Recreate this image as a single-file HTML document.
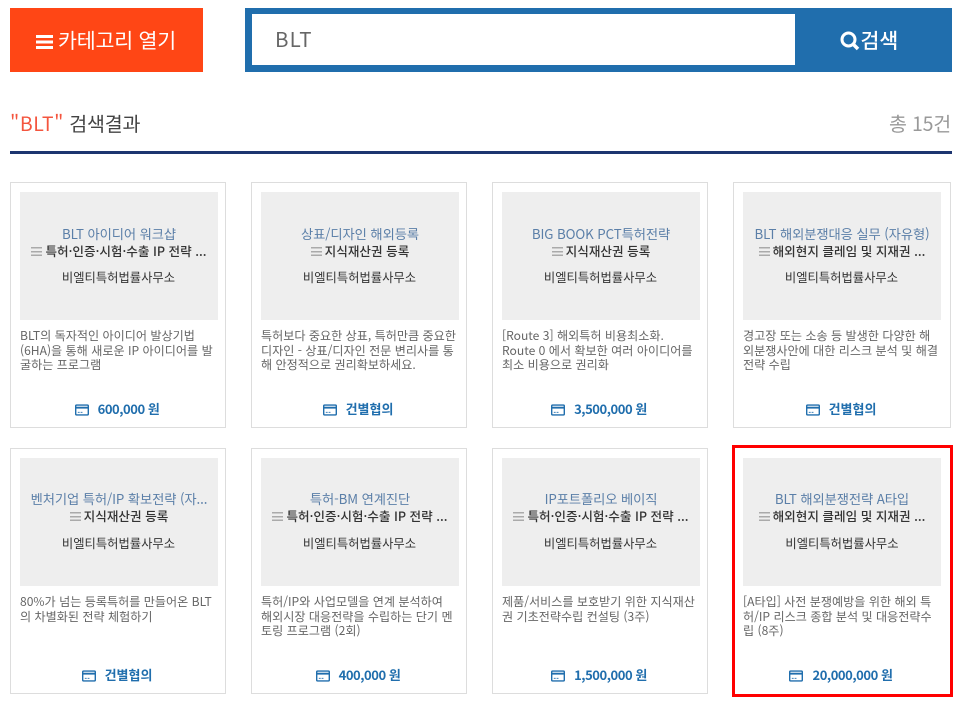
<!DOCTYPE html>
<html lang="ko"><head><meta charset="utf-8"><title>검색결과</title>
<style>
*{box-sizing:border-box;margin:0;padding:0}
html,body{width:966px;height:708px;overflow:hidden;background:#fff}
body{position:relative;font-family:"Noto Sans CJK KR","Liberation Sans",sans-serif;color:#333}
.a{position:absolute;white-space:nowrap}
.card{position:absolute;width:216px;height:246px;border:1px solid #ddd;background:#fff}
.card .g{position:absolute;left:9px;top:9px;width:198px;height:128px;background:#eee}
.t,.c,.o{position:absolute;left:9px;width:198px;text-align:center;white-space:nowrap;line-height:18px}
.t{top:41px;color:#5b7fa8;font-size:13.300px;letter-spacing:-.1px}
.c{top:58px;color:#333;font-weight:500;font-size:12.600px}
.o{top:85px;left:8.500px;color:#333;font-size:12.300px}
.r1 .t{top:42px}
.r1 .c{top:59px}
.c i{display:inline-block;width:11px;height:9px;margin-right:3px;vertical-align:0;background:linear-gradient(#aaa 0 1.500px,transparent 1.500px 4px,#aaa 4px 5.500px,transparent 5.500px 7.500px,#aaa 7.500px 9px)}
.d{position:absolute;left:9px;top:146px;width:200px;font-size:12.100px;line-height:14.500px;color:#666;white-space:pre}
.p{position:absolute;left:0;width:212px;top:216px;text-align:center;font-size:13px;line-height:20px;font-weight:700;color:#206ead;white-space:nowrap}
.p svg{vertical-align:-2px;margin-right:9px}
.p.n{letter-spacing:-.45px}
</style></head><body>
<div class="a" style="left:9.500px;top:8px;width:193px;height:64px;background:#ff4615;color:#fff;font-size:20.600px;line-height:62px;text-align:center;letter-spacing:-.2px"><svg width="17" height="14" viewBox="0 0 17 14" style="vertical-align:-1px;margin-right:5px"><path d="M0 1.500h17M0 7h17M0 12.500h17" stroke="#fff" stroke-width="3"/></svg>카테고리 열기</div>
<div class="a" style="left:245px;top:8px;width:707px;height:64px;background:#206ead"></div>
<div class="a" style="left:252px;top:14px;width:543px;height:51px;background:#fff"></div>
<div class="a" style="left:275px;top:13px;font-size:20.500px;line-height:51px;color:#666;letter-spacing:1.200px">BLT</div>
<div class="a" style="left:840px;top:14px;font-size:20.500px;line-height:50px;color:#fff;font-weight:500"><svg width="20" height="20" viewBox="0 0 20 20" style="vertical-align:-3px;margin-right:.5px"><circle cx="8.500" cy="8.500" r="6.500" fill="none" stroke="#fff" stroke-width="3"/><path d="M13 13l5 5" stroke="#fff" stroke-width="3.500"/></svg>검색</div>
<div class="a" style="left:10px;top:109px;font-size:19.500px;line-height:28px;color:#444;letter-spacing:-.2px"><span style="color:#f4553e;letter-spacing:.6px">"BLT"</span> 검색결과</div>
<div class="a" style="right:15px;top:109px;font-size:19.500px;line-height:28px;color:#999;letter-spacing:-.2px">총 15건</div>
<div class="a" style="left:10px;top:151px;width:942px;height:3px;background:#1d3570"></div>

<div class="card r1" style="left:10px;top:182px"><div class="g"></div><div class="t">BLT 아이디어 워크샵</div><div class="c"><i></i>특허·인증·시험·수출 IP 전략 ...</div><div class="o">비엘티특허법률사무소</div><div class="d">BLT의 독자적인 아이디어 발상기법
(6HA)을 통해 새로운 IP 아이디어를 발
굴하는 프로그램</div><div class="p n"><svg width="14" height="12" viewBox="0 0 15 12"><rect x=".75" y=".75" width="13.500" height="10.500" rx="1" fill="none" stroke="#206ead" stroke-width="1.500"/><path d="M1 3.500h13" stroke="#206ead" stroke-width="2"/><path d="M3 8.500h2M6 8.500h2" stroke="#206ead"/></svg>600,000 원</div></div>

<div class="card r1" style="left:251px;top:182px"><div class="g"></div><div class="t">상표/디자인 해외등록</div><div class="c"><i></i>지식재산권 등록</div><div class="o">비엘티특허법률사무소</div><div class="d">특허보다 중요한 상표, 특허만큼 중요한
디자인 - 상표/디자인 전문 변리사를 통
해 안정적으로 권리확보하세요.</div><div class="p"><svg width="14" height="12" viewBox="0 0 15 12"><rect x=".75" y=".75" width="13.500" height="10.500" rx="1" fill="none" stroke="#206ead" stroke-width="1.500"/><path d="M1 3.500h13" stroke="#206ead" stroke-width="2"/><path d="M3 8.500h2M6 8.500h2" stroke="#206ead"/></svg>건별협의</div></div>

<div class="card r1" style="left:492px;top:182px"><div class="g"></div><div class="t">BIG BOOK PCT특허전략</div><div class="c"><i></i>지식재산권 등록</div><div class="o">비엘티특허법률사무소</div><div class="d">[Route 3] 해외특허 비용최소화.
Route 0 에서 확보한 여러 아이디어를
최소 비용으로 권리화</div><div class="p n"><svg width="14" height="12" viewBox="0 0 15 12"><rect x=".75" y=".75" width="13.500" height="10.500" rx="1" fill="none" stroke="#206ead" stroke-width="1.500"/><path d="M1 3.500h13" stroke="#206ead" stroke-width="2"/><path d="M3 8.500h2M6 8.500h2" stroke="#206ead"/></svg>3,500,000 원</div></div>

<div class="card r1" style="left:733px;top:182px;width:218px"><div class="g"></div><div class="t">BLT 해외분쟁대응 실무 (자유형)</div><div class="c"><i></i>해외현지 클레임 및 지재권 ...</div><div class="o">비엘티특허법률사무소</div><div class="d">경고장 또는 소송 등 발생한 다양한 해
외분쟁사안에 대한 리스크 분석 및 해결
전략 수립</div><div class="p" style="width:214px"><svg width="14" height="12" viewBox="0 0 15 12"><rect x=".75" y=".75" width="13.500" height="10.500" rx="1" fill="none" stroke="#206ead" stroke-width="1.500"/><path d="M1 3.500h13" stroke="#206ead" stroke-width="2"/><path d="M3 8.500h2M6 8.500h2" stroke="#206ead"/></svg>건별협의</div></div>

<div class="card" style="left:10px;top:448px"><div class="g"></div><div class="t">벤처기업 특허/IP 확보전략 (자...</div><div class="c"><i></i>지식재산권 등록</div><div class="o">비엘티특허법률사무소</div><div class="d">80%가 넘는 등록특허를 만들어온 BLT
의 차별화된 전략 체험하기</div><div class="p"><svg width="14" height="12" viewBox="0 0 15 12"><rect x=".75" y=".75" width="13.500" height="10.500" rx="1" fill="none" stroke="#206ead" stroke-width="1.500"/><path d="M1 3.500h13" stroke="#206ead" stroke-width="2"/><path d="M3 8.500h2M6 8.500h2" stroke="#206ead"/></svg>건별협의</div></div>

<div class="card" style="left:251px;top:448px"><div class="g"></div><div class="t">특허-BM 연계진단</div><div class="c"><i></i>특허·인증·시험·수출 IP 전략 ...</div><div class="o">비엘티특허법률사무소</div><div class="d">특허/IP와 사업모델을 연계 분석하여
해외시장 대응전략을 수립하는 단기 멘
토링 프로그램 (2회)</div><div class="p n"><svg width="14" height="12" viewBox="0 0 15 12"><rect x=".75" y=".75" width="13.500" height="10.500" rx="1" fill="none" stroke="#206ead" stroke-width="1.500"/><path d="M1 3.500h13" stroke="#206ead" stroke-width="2"/><path d="M3 8.500h2M6 8.500h2" stroke="#206ead"/></svg>400,000 원</div></div>

<div class="card" style="left:492px;top:448px"><div class="g"></div><div class="t">IP포트폴리오 베이직</div><div class="c"><i></i>특허·인증·시험·수출 IP 전략 ...</div><div class="o">비엘티특허법률사무소</div><div class="d">제품/서비스를 보호받기 위한 지식재산
권 기초전략수립 컨설팅 (3주)</div><div class="p n"><svg width="14" height="12" viewBox="0 0 15 12"><rect x=".75" y=".75" width="13.500" height="10.500" rx="1" fill="none" stroke="#206ead" stroke-width="1.500"/><path d="M1 3.500h13" stroke="#206ead" stroke-width="2"/><path d="M3 8.500h2M6 8.500h2" stroke="#206ead"/></svg>1,500,000 원</div></div>

<div class="card" style="left:733px;top:448px;width:218px;border:0"><div class="g" style="left:10px;top:10px"></div><div class="t" style="left:10px;top:42px">BLT 해외분쟁전략 A타입</div><div class="c" style="left:10px;top:59px"><i></i>해외현지 클레임 및 지재권 ...</div><div class="o" style="left:10px;top:86px">비엘티특허법률사무소</div><div class="d" style="left:10px;top:147px">[A타입] 사전 분쟁예방을 위한 해외 특
허/IP 리스크 종합 분석 및 대응전략수
립 (8주)</div><div class="p n" style="width:216px;top:217px"><svg width="14" height="12" viewBox="0 0 15 12"><rect x=".75" y=".75" width="13.500" height="10.500" rx="1" fill="none" stroke="#206ead" stroke-width="1.500"/><path d="M1 3.500h13" stroke="#206ead" stroke-width="2"/><path d="M3 8.500h2M6 8.500h2" stroke="#206ead"/></svg>20,000,000 원</div></div>
<div class="a" style="left:732px;top:445px;width:221px;height:252px;border:3px solid #f00"></div>
</body></html>
